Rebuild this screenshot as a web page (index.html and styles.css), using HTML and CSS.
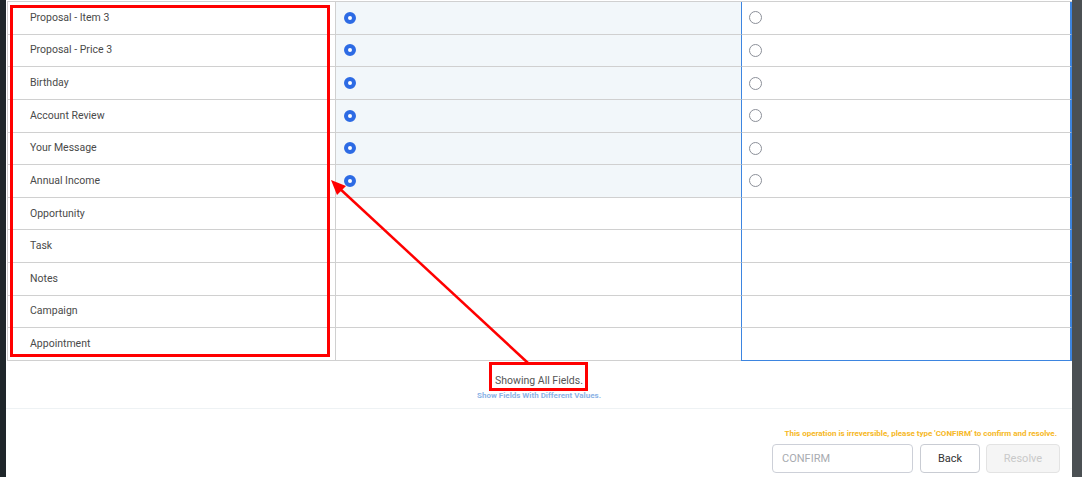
FILE: index.html
```html
<!DOCTYPE html>
<html lang="en">
<head>
    <meta charset="UTF-8">
    <meta name="viewport" content="width=device-width, initial-scale=1.0">
    <title>Merge Fields</title>
    <link rel="stylesheet" href="styles.css">
</head>
<body>

<div class="screen">
    <div class="side-left"></div>

    <div class="modal">
        <table class="merge-table">
            <tr>
                <td class="field">Proposal - Item 3</td>
                <td class="pick picked"><span class="radio on"></span></td>
                <td class="pick other"><span class="radio"></span></td>
            </tr>
            <tr>
                <td class="field">Proposal - Price 3</td>
                <td class="pick picked"><span class="radio on"></span></td>
                <td class="pick other"><span class="radio"></span></td>
            </tr>
            <tr>
                <td class="field">Birthday</td>
                <td class="pick picked"><span class="radio on"></span></td>
                <td class="pick other"><span class="radio"></span></td>
            </tr>
            <tr>
                <td class="field">Account Review</td>
                <td class="pick picked"><span class="radio on"></span></td>
                <td class="pick other"><span class="radio"></span></td>
            </tr>
            <tr>
                <td class="field">Your Message</td>
                <td class="pick picked"><span class="radio on"></span></td>
                <td class="pick other"><span class="radio"></span></td>
            </tr>
            <tr>
                <td class="field">Annual Income</td>
                <td class="pick picked"><span class="radio on"></span></td>
                <td class="pick other"><span class="radio"></span></td>
            </tr>
            <tr>
                <td class="field">Opportunity</td>
                <td class="pick"></td>
                <td class="pick other"></td>
            </tr>
            <tr>
                <td class="field">Task</td>
                <td class="pick"></td>
                <td class="pick other"></td>
            </tr>
            <tr>
                <td class="field">Notes</td>
                <td class="pick"></td>
                <td class="pick other"></td>
            </tr>
            <tr>
                <td class="field">Campaign</td>
                <td class="pick"></td>
                <td class="pick other"></td>
            </tr>
            <tr class="last">
                <td class="field">Appointment</td>
                <td class="pick"></td>
                <td class="pick other"></td>
            </tr>
        </table>

        <div class="status">
            <div class="status-text">Showing All Fields.</div>
            <a class="status-link" href="#">Show Fields With Different Values.</a>
        </div>

        <div class="footer">
            <div class="warning">This operation is irreversible, please type 'CONFIRM' to confirm and resolve.</div>
            <div class="actions">
                <input type="text" class="confirm-input" placeholder="CONFIRM">
                <button class="btn">Back</button>
                <button class="btn btn-disabled" disabled>Resolve</button>
            </div>
        </div>
    </div>

    <div class="side-right"></div>

    <!-- annotations -->
    <div class="mark mark-fields"></div>
    <div class="mark mark-status"></div>
    <svg class="arrow" width="1082" height="477" viewBox="0 0 1082 477">
        <line x1="528" y1="363" x2="338" y2="187" stroke="#ff0000" stroke-width="2.5"/>
        <polygon points="331,180 346,186 337,195" fill="#ff0000"/>
    </svg>
</div>

</body>
</html>
```

FILE: styles.css
```css
body {
    margin: 0;
    font-family: Roboto, "Open Sans", Arial, sans-serif;
    background-color: #4b5053;
}
.screen {
    position: relative;
    display: flex;
    height: 477px;
    overflow: hidden;
}
.side-left {
    width: 6px;
    background-color: #1f262a;
}
.side-right {
    width: 10px;
    background-color: #4b5053;
}
.modal {
    flex: 1;
    background-color: white;
    display: flex;
    flex-direction: column;
}
.merge-table {
    margin: 1px 0 0 1px;
    width: 1065px;
    border-collapse: separate;
    border-spacing: 0;
    border-top: 1px solid #d0d0d0;
    border-left: 1px solid #d0d0d0;
    table-layout: fixed;
}
.merge-table td {
    height: 31.64px;
    padding: 0;
    border-bottom: 1px solid #d0d0d0;
    vertical-align: middle;
}
.merge-table td.field {
    width: 305px;
    height: 30.64px;
    padding: 0 0 1px 22px;
    font-size: 10.5px;
    color: #4a4a4a;
}
.merge-table td.pick {
    width: 396px;
    padding-left: 8px;
    border-left: 1px solid #d0d0d0;
}
.merge-table td.picked {
    background-color: #f2f7fa;
}
.merge-table td.other {
    width: 321px;
    padding-left: 7px;
    border-left: 1px solid #3d85e0;
    border-right: 2px solid #3d85e0;
}
.merge-table .last td.other {
    border-bottom: 1px solid #3d85e0;
}
.radio {
    display: block;
    box-sizing: border-box;
    width: 13px;
    height: 13px;
    border: 1px solid #8c9099;
    border-radius: 50%;
    background-color: white;
}
.radio.on {
    width: 12px;
    height: 12px;
    border: 4px solid #2d6be4;
}
.status {
    display: flex;
    flex-direction: column;
    align-items: center;
    padding: 12px 0 6px;
    border-bottom: 1px solid #eef2f4;
}
.status-text {
    font-size: 10.5px;
    line-height: 16px;
    color: #555;
}
.status-link {
    font-size: 8px;
    font-weight: 700;
    line-height: 12px;
    margin-top: 1px;
    color: #8cb3e6;
    text-decoration: none;
}
.footer {
    display: flex;
    flex-direction: column;
    align-items: flex-end;
    padding: 19px 12px 0 0;
}
.warning {
    font-size: 8px;
    font-weight: 700;
    line-height: 12px;
    color: #f6b826;
    padding-right: 3px;
}
.actions {
    display: flex;
    gap: 7px;
    margin-top: 4px;
}
.confirm-input {
    box-sizing: border-box;
    width: 141px;
    height: 29px;
    padding: 0 9px;
    border: 1px solid #cdd0d8;
    border-radius: 4px;
    font-family: inherit;
    font-size: 11px;
    color: #333;
}
.confirm-input::placeholder {
    color: #a8abb0;
}
.btn {
    box-sizing: border-box;
    width: 60px;
    height: 29px;
    border: 1px solid #c9ccd3;
    border-radius: 4px;
    background-color: white;
    font-family: inherit;
    font-size: 11px;
    color: #333;
}
.btn-disabled {
    width: 74px;
    margin-left: -1px;
    background-color: #f5f5f5;
    border-color: #e3e3e3;
    color: #c9c9c9;
}
.mark {
    position: absolute;
    border: 3px solid #ff0000;
}
.mark-fields {
    left: 10px;
    top: 5px;
    width: 314px;
    height: 346px;
}
.mark-status {
    left: 489px;
    top: 362px;
    width: 93px;
    height: 23px;
}
.arrow {
    position: absolute;
    left: 0;
    top: 0;
    pointer-events: none;
}
```
